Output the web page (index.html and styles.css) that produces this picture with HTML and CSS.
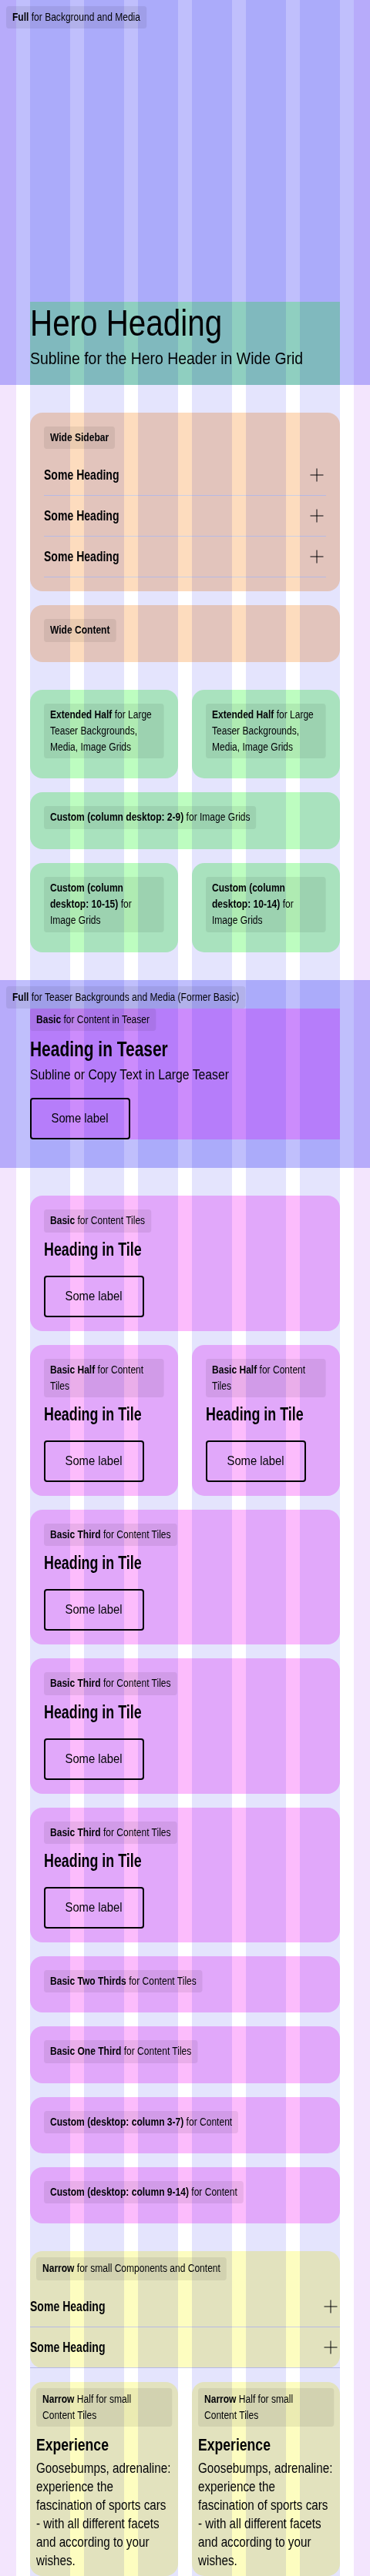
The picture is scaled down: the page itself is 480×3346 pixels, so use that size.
FILE: index.html
```html
<!DOCTYPE html>
<html lang="en">
<head>
<meta charset="utf-8">
<title>Grid</title>
<link rel="stylesheet" href="styles.css">
</head>
<body>
<div class="grid-overlay" aria-hidden="true">
  <span class="ov-margin"></span>
  <span class="ov-col"></span><span class="ov-col"></span><span class="ov-col"></span>
  <span class="ov-col"></span><span class="ov-col"></span><span class="ov-col"></span>
  <span class="ov-margin"></span>
</div>
<main class="page">
  <section class="full hero">
    <span class="tag"><b>Full</b> for Background and Media</span>
    <div class="hero-content">
      <h1 class="hero-title">Hero Heading</h1>
      <p class="hero-sub">Subline for the Hero Header in Wide Grid</p>
    </div>
  </section>

  <div class="group">
    <div class="card salmon">
      <span class="tag"><b>Wide Sidebar</b></span>
      <div class="accordion">
        <div class="acc-item"><span class="acc-title">Some Heading</span><svg class="plus" viewBox="0 0 24 24"><path d="M12 3.5v17M3.5 12h17"/></svg></div>
        <div class="acc-item"><span class="acc-title">Some Heading</span><svg class="plus" viewBox="0 0 24 24"><path d="M12 3.5v17M3.5 12h17"/></svg></div>
        <div class="acc-item"><span class="acc-title">Some Heading</span><svg class="plus" viewBox="0 0 24 24"><path d="M12 3.5v17M3.5 12h17"/></svg></div>
      </div>
    </div>
    <div class="card salmon">
      <span class="tag"><b>Wide Content</b></span>
    </div>
  </div>

  <div class="group">
    <div class="row-2">
      <div class="card green"><span class="tag"><b>Extended Half</b> for Large Teaser Backgrounds, Media, Image Grids</span></div>
      <div class="card green"><span class="tag"><b>Extended Half</b> for Large Teaser Backgrounds, Media, Image Grids</span></div>
    </div>
    <div class="card green"><span class="tag"><b>Custom (column desktop: 2-9)</b> for Image Grids</span></div>
    <div class="row-2">
      <div class="card green"><span class="tag"><b>Custom (column desktop: 10-15)</b> for Image Grids</span></div>
      <div class="card green"><span class="tag"><b>Custom (column desktop: 10-14)</b> for Image Grids</span></div>
    </div>
  </div>

  <section class="full teaser">
    <span class="tag"><b>Full</b> for Teaser Backgrounds and Media (Former Basic)</span>
    <div class="teaser-content">
      <span class="tag"><b>Basic</b> for Content in Teaser</span>
      <h2 class="teaser-title">Heading in Teaser</h2>
      <p class="teaser-sub">Subline or Copy Text in Large Teaser</p>
      <button class="btn" type="button"><span class="btn-label">Some label</span></button>
    </div>
  </section>

  <div class="group">
    <div class="card pink">
      <span class="tag"><b>Basic</b> for Content Tiles</span>
      <h3 class="tile-title">Heading in Tile</h3>
      <button class="btn" type="button"><span class="btn-label">Some label</span></button>
    </div>
    <div class="row-2">
      <div class="card pink">
        <span class="tag"><b>Basic Half</b> for Content Tiles</span>
        <h3 class="tile-title">Heading in Tile</h3>
        <button class="btn" type="button"><span class="btn-label">Some label</span></button>
      </div>
      <div class="card pink">
        <span class="tag"><b>Basic Half</b> for Content Tiles</span>
        <h3 class="tile-title">Heading in Tile</h3>
        <button class="btn" type="button"><span class="btn-label">Some label</span></button>
      </div>
    </div>
    <div class="card pink">
      <span class="tag"><b>Basic Third</b> for Content Tiles</span>
      <h3 class="tile-title">Heading in Tile</h3>
      <button class="btn" type="button"><span class="btn-label">Some label</span></button>
    </div>
    <div class="card pink">
      <span class="tag"><b>Basic Third</b> for Content Tiles</span>
      <h3 class="tile-title">Heading in Tile</h3>
      <button class="btn" type="button"><span class="btn-label">Some label</span></button>
    </div>
    <div class="card pink">
      <span class="tag"><b>Basic Third</b> for Content Tiles</span>
      <h3 class="tile-title">Heading in Tile</h3>
      <button class="btn" type="button"><span class="btn-label">Some label</span></button>
    </div>
    <div class="card pink"><span class="tag"><b>Basic Two Thirds</b> for Content Tiles</span></div>
    <div class="card pink"><span class="tag"><b>Basic One Third</b> for Content Tiles</span></div>
    <div class="card pink"><span class="tag"><b>Custom (desktop: column 3-7)</b> for Content</span></div>
    <div class="card pink"><span class="tag"><b>Custom (desktop: column 9-14)</b> for Content</span></div>
  </div>

  <div class="group">
    <div class="card yellow narrow">
      <span class="tag"><b>Narrow</b> for small Components and Content</span>
      <div class="accordion">
        <div class="acc-item"><span class="acc-title">Some Heading</span><svg class="plus" viewBox="0 0 24 24"><path d="M12 3.5v17M3.5 12h17"/></svg></div>
        <div class="acc-item"><span class="acc-title">Some Heading</span><svg class="plus" viewBox="0 0 24 24"><path d="M12 3.5v17M3.5 12h17"/></svg></div>
      </div>
    </div>
    <div class="row-2">
      <div class="card yellow small">
        <span class="tag"><b>Narrow</b> Half for small Content Tiles</span>
        <h3 class="narrow-title">Experience</h3>
        <p class="narrow-text">Goosebumps, adrenaline: experience the fascination of sports cars - with all different facets and according to your wishes.</p>
      </div>
      <div class="card yellow small">
        <span class="tag"><b>Narrow</b> Half for small Content Tiles</span>
        <h3 class="narrow-title">Experience</h3>
        <p class="narrow-text">Goosebumps, adrenaline: experience the fascination of sports cars - with all different facets and according to your wishes.</p>
      </div>
    </div>
  </div>
</main>
</body>
</html>
```

FILE: styles.css
```css
html { background: #ffffff; }
body {
  margin: 0;
  position: relative;
  background: #ffffff;
  color: #010205;
  font-family: "Liberation Sans", Arial, sans-serif;
  overflow-x: hidden;
}
* { box-sizing: border-box; }

/* column overlay of the grid */
.grid-overlay {
  position: absolute;
  top: 0; left: 0; right: 0; bottom: 0;
  display: grid;
  grid-template-columns: 21px repeat(6, 1fr) 21px;
  column-gap: 18px;
  mix-blend-mode: multiply;
  pointer-events: none;
  z-index: 10;
}
.ov-margin { background: #f3e5fd; }
.ov-col { background: #e4e4fd; }

.page {
  display: flex;
  flex-direction: column;
  gap: 36px;
}

/* condensed label chips */
.tag {
  display: block;
  width: max-content;
  max-width: calc(100% / 0.86);
  padding: 4px 9.3px;
  border-radius: 4px;
  background: rgba(1, 2, 5, 0.07);
  font-size: 14px;
  line-height: 21.3px;
  transform: scaleX(0.86);
  transform-origin: left top;
}
.tag b { font-weight: 700; }

.full { background: #c0bffc; }
.hero {
  height: 500px;
  display: flex;
  flex-direction: column;
  padding-top: 8px;
}
.hero > .tag { margin-left: 8px; }
.hero-content {
  margin: auto 39px 0;
  background: #8fcfc0;
  padding-bottom: 19px;
}
.hero-title {
  margin: 0;
  font-size: 48px;
  line-height: 56px;
  font-weight: 400;
  white-space: nowrap;
  transform: scaleX(0.841);
  transform-origin: left center;
}
.hero-sub {
  margin: 3px 0 0;
  font-size: 22px;
  line-height: 30px;
  white-space: nowrap;
  transform: scaleX(0.883);
  transform-origin: left center;
}

.group {
  margin: 0 39px;
  display: flex;
  flex-direction: column;
  gap: 18px;
}
.row-2 {
  display: grid;
  grid-template-columns: repeat(2, minmax(0, 1fr));
  gap: 18px;
}
.card {
  min-width: 0;
  border-radius: 16px;
  padding: 18px;
}
.card > .tag { margin-bottom: 8px; }
.salmon { background: #fddcbe; }
.green { background: #bdfdc0; }
.pink { background: #fcbcfc; }
.yellow { background: #fdfdc0; }

.accordion { display: flex; flex-direction: column; }
.acc-item {
  display: flex;
  justify-content: space-between;
  align-items: center;
  padding: 13px 0;
  border-bottom: 1px solid #cdd0e6;
}
.acc-title {
  display: inline-block;
  font-size: 18px;
  line-height: 26px;
  font-weight: 700;
  white-space: nowrap;
  transform: scaleX(0.78);
  transform-origin: left center;
}
.plus {
  width: 24px;
  height: 24px;
  flex: none;
  fill: none;
  stroke: #010205;
  stroke-width: 1;
}

.teaser { padding: 8px 0 37px; }
.teaser > .tag { margin-left: 8px; }
.teaser-content {
  margin: 0 39px;
  background: #cc8cfc;
}
.teaser-content > .tag { margin-bottom: 8px; }
.teaser-title {
  margin: 0;
  font-size: 27px;
  line-height: 32px;
  font-weight: 700;
  white-space: nowrap;
  transform: scaleX(0.775);
  transform-origin: left center;
}
.teaser-sub {
  margin: 4px 0 17px;
  font-size: 18px;
  line-height: 26px;
  white-space: nowrap;
  transform: scaleX(0.876);
  transform-origin: left center;
}

.btn {
  display: flex;
  align-items: center;
  justify-content: center;
  width: 130px;
  height: 54px;
  padding: 0;
  font: inherit;
  color: #010205;
  background: transparent;
  border: 2px solid #010205;
  border-radius: 4px;
}
.btn-label {
  display: inline-block;
  font-size: 17px;
  line-height: 24px;
  white-space: nowrap;
  transform: scaleX(0.87);
  transform-origin: center;
}

.tile-title {
  margin: 0 0 20px;
  font-size: 23px;
  line-height: 28px;
  font-weight: 700;
  white-space: nowrap;
  transform: scaleX(0.776);
  transform-origin: left center;
}

.narrow { padding: 8px 0 0; }
.narrow > .tag { margin-left: 8px; }
.small { padding: 8px; }
.narrow-title {
  margin: 0;
  font-size: 22px;
  line-height: 32px;
  font-weight: 700;
  white-space: nowrap;
  transform: scaleX(0.8);
  transform-origin: left center;
}
.narrow-text {
  width: 208px;
  margin: 2px 0 0;
  font-size: 18px;
  line-height: 24px;
  transform: scaleX(0.846);
  transform-origin: left top;
}
```
